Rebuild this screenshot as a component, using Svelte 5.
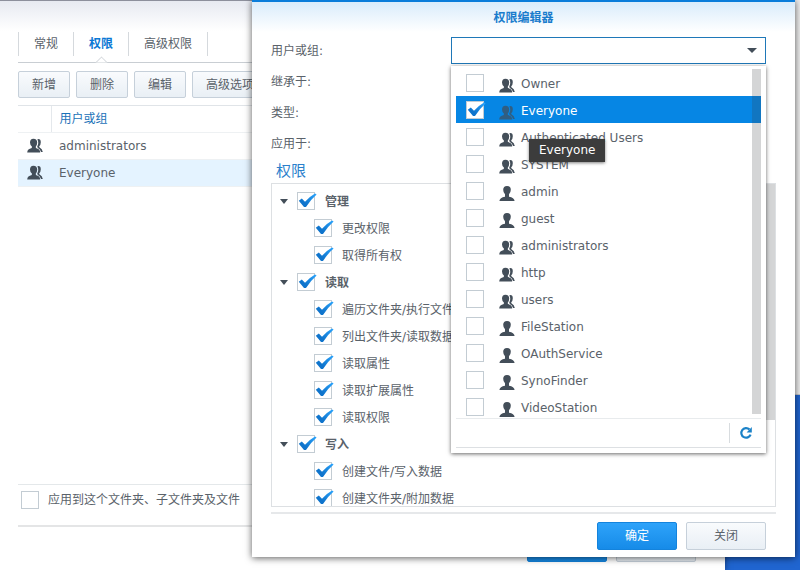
<script>
    let tabs = ["常规", "权限", "高级权限"];
    let activeTab = $state("权限");

    let actions = ["新增", "删除", "编辑", "高级选项"];

    let entries = ["administrators", "Everyone"];
    let currentEntry = $state("Everyone");

    let accounts = $state([
        { name: "Owner", group: true, checked: false },
        { name: "Everyone", group: true, checked: true },
        { name: "Authenticated Users", group: true, checked: false },
        { name: "SYSTEM", group: true, checked: false },
        { name: "admin", group: false, checked: false },
        { name: "guest", group: false, checked: false },
        { name: "administrators", group: true, checked: false },
        { name: "http", group: true, checked: false },
        { name: "users", group: true, checked: false },
        { name: "FileStation", group: false, checked: false },
        { name: "OAuthService", group: false, checked: false },
        { name: "SynoFinder", group: false, checked: false },
        { name: "VideoStation", group: false, checked: false },
    ]);

    let permissions = [
        { name: "管理", items: ["更改权限", "取得所有权"] },
        {
            name: "读取",
            items: [
                "遍历文件夹/执行文件",
                "列出文件夹/读取数据",
                "读取属性",
                "读取扩展属性",
                "读取权限",
            ],
        },
        { name: "写入", items: ["创建文件/写入数据", "创建文件夹/附加数据"] },
    ];

    let open = $state(true);
    let query = $state("");
</script>

{#snippet mark()}
    <svg class="mark" viewBox="0 0 20 18" aria-hidden="true">
        <defs>
            <linearGradient id="tick" x1="0" y1="1" x2="1" y2="0">
                <stop offset="0.3" stop-color="#0f74cc" />
                <stop offset="1" stop-color="#2ba6ff" />
            </linearGradient>
        </defs>
        <path
            d="M1.8 8.8 L4.8 6.6 L8 9.8 Q12 4.8 18 1.4 L19.6 2.6 Q13.4 8 9 15 L7 15 Z"
            fill="url(#tick)"
        />
    </svg>
{/snippet}

{#snippet person(group)}
    <svg class="person" viewBox="0 0 16 15" aria-hidden="true">
        {#if group}
            <path
                d="M10.4 1.2 Q13.8 .6 13.8 4.2 Q13.8 6.8 12.2 8.2 L12.4 9.2 Q15.4 10.8 15.8 14 L14 14 Q13.2 11.2 10.8 10 L10.2 8.6 Q12.2 5 10.4 1.2 Z"
            />
            <path
                d="M6.4 .8 Q10.2 .8 10.2 4.6 Q10.2 7.2 8.8 8.4 L8.9 10 Q13 11 13.2 14.4 L.2 14.4 Q.4 11 4.8 10 L4.9 8.4 Q3 7.2 3 4.6 Q3 .8 6.4 .8 Z"
            />
        {:else}
            <path
                d="M8 0 Q11.8 0 11.8 3.8 Q11.8 6.6 10 8.2 L10 10.8 Q15.2 11.6 15.6 15 L.4 15 Q.8 11.6 6 10.8 L6 8.2 Q4.2 6.6 4.2 3.8 Q4.2 0 8 0 Z"
            />
        {/if}
    </svg>
{/snippet}

<div class="desktop">
    <div class="back-window"></div>

    <section class="window properties">
        <nav class="tabs">
            {#each tabs as tab}
                <button
                    class="tab"
                    class:active={tab === activeTab}
                    onclick={() => (activeTab = tab)}>{tab}</button
                >
            {/each}
        </nav>

        <div class="toolbar">
            {#each actions as action}
                <button class="btn">{action}</button>
            {/each}
        </div>

        <div class="grid">
            <table>
                <thead>
                    <tr><th class="type"></th><th>用户或组</th></tr>
                </thead>
                <tbody>
                    {#each entries as entry}
                        <tr
                            class:selected={entry === currentEntry}
                            onclick={() => (currentEntry = entry)}
                        >
                            <td class="type">{@render person(true)}</td>
                            <td>{entry}</td>
                        </tr>
                    {/each}
                </tbody>
            </table>
        </div>

        <label class="apply">
            <span class="check"><input type="checkbox" />{@render mark()}</span>
            应用到这个文件夹、子文件夹及文件
        </label>

        <footer class="window-actions">
            <button class="btn wide primary">确定</button>
            <button class="btn wide">取消</button>
        </footer>
    </section>

    <section class="window editor" role="dialog" aria-labelledby="title">
        <h1 id="title">权限编辑器</h1>

        <div class="form">
            <div class="field">
                <label for="account">用户或组:</label>
                <div class="combo">
                    <input id="account" type="text" autocomplete="off" bind:value={query} />
                    <button
                        class="trigger"
                        aria-label="用户或组"
                        onclick={() => (open = !open)}
                    ></button>

                    {#if open}
                        <div class="dropdown">
                            <div class="options">
                                {#each accounts as account}
                                    <label class="option" class:selected={account.checked}>
                                        <span class="check">
                                            <input
                                                type="checkbox"
                                                bind:checked={account.checked}
                                            />
                                            {@render mark()}
                                        </span>
                                        {@render person(account.group)}
                                        <span class="name">{account.name}</span>
                                    </label>
                                {/each}
                                <div class="scroll"></div>
                            </div>
                            <div class="paging">
                                <button class="refresh" aria-label="刷新">
                                    <svg viewBox="0 0 14 14" aria-hidden="true">
                                        <path
                                            d="M10.4 3.4 A4.8 4.8 0 1 0 11.6 8.6"
                                            fill="none"
                                            stroke="#1b82c8"
                                            stroke-width="2.2"
                                        />
                                        <path d="M12.8 1 V6.4 H7.6 Z" fill="#1b82c8" />
                                    </svg>
                                </button>
                            </div>
                            <div class="tooltip">Everyone</div>
                        </div>
                    {/if}
                </div>
            </div>
            <div class="field"><span>继承于:</span></div>
            <div class="field"><span>类型:</span></div>
            <div class="field"><span>应用于:</span></div>
        </div>

        <h2>权限</h2>
        <div class="tree">
            {#each permissions as group}
                <div class="node">
                    <i class="arrow"></i>
                    <label>
                        <span class="check"
                            ><input type="checkbox" checked />{@render mark()}</span
                        >
                        <b>{group.name}</b>
                    </label>
                </div>
                {#each group.items as item}
                    <div class="node leaf">
                        <label>
                            <span class="check"
                                ><input type="checkbox" checked />{@render mark()}</span
                            >
                            {item}
                        </label>
                    </div>
                {/each}
            {/each}
            <div class="scroll"></div>
        </div>

        <footer class="editor-actions">
            <button class="btn wide primary">确定</button>
            <button class="btn wide">关闭</button>
        </footer>
    </section>
</div>

<style>
    :global(body) {
        margin: 0;
    }

    .desktop {
        position: relative;
        height: 100vh;
        overflow: hidden;
        background: #2065d0;
        color: #5a626a;
        font: 12px/18px "DejaVu Sans", "Noto Sans CJK SC", sans-serif;
    }

    .desktop *,
    .desktop *::before {
        box-sizing: border-box;
    }

    button,
    input {
        font: inherit;
        color: inherit;
        margin: 0;
    }

    .back-window {
        position: absolute;
        top: 0;
        right: 0;
        width: 200px;
        height: 395px;
        background: #ededed;
        border-bottom: 1px solid #c8c8c8;
    }

    .window {
        position: absolute;
        top: 0;
        display: flex;
        flex-direction: column;
        background: #fff;
    }

    /* properties window */

    .properties {
        left: 0;
        right: 75px;
        height: 100%;
        padding: 31px 29px 8px 18px;
        border-top: 1px solid #8d909c;
        background: linear-gradient(#e7eaf1, #fff 30px);
        box-shadow: 0 0 6px rgba(0, 0, 0, 0.5);
    }

    .tabs {
        display: flex;
        padding-bottom: 6px;
        border-bottom: 1px solid #c9ced3;
    }

    .tab {
        position: relative;
        height: 24px;
        padding: 0 15px;
        border: 0;
        border-left: 1px solid #d5d9dd;
        background: none;
    }

    .tab:last-child {
        border-right: 1px solid #d5d9dd;
    }

    .tab.active {
        color: #0a78d4;
        font-weight: bold;
    }

    .tab.active::after {
        content: "";
        position: absolute;
        left: 50%;
        bottom: -11px;
        width: 8px;
        height: 8px;
        margin-left: -4px;
        background: #fff;
        border: solid #c9ced3;
        border-width: 1px 0 0 1px;
        transform: rotate(45deg);
        clip-path: polygon(0 0, 100% 0, 0 100%);
    }

    .toolbar {
        display: flex;
        gap: 6px;
        padding: 8px 0 7px;
    }

    .btn {
        height: 27px;
        padding: 0 13px;
        border: 1px solid #c6d0da;
        border-radius: 2px;
        background: linear-gradient(#f9fbfd, #e9eff5);
    }

    .btn.wide {
        width: 80px;
        height: 28px;
    }

    .btn.primary {
        border-color: #1483dc;
        background: linear-gradient(#2ea3fa, #168be8);
        color: #fff;
    }

    .grid {
        flex: 1;
        border-top: 1px solid #e0e4e8;
        border-bottom: 1px solid #e4e8ea;
    }

    table {
        width: 100%;
        border-collapse: collapse;
    }

    th,
    td {
        height: 27px;
        padding: 0 8px;
        border-bottom: 1px solid #eef1f3;
        text-align: left;
    }

    th {
        height: 26px;
        color: #1a72b8;
        font-weight: normal;
    }

    .type {
        width: 33px;
        padding: 0;
    }

    th.type {
        border-right: 1px solid #e4e8ec;
    }

    td .person {
        display: block;
        margin-left: 9px;
    }

    tr.selected {
        background: #e4f3ff;
    }

    .apply {
        display: flex;
        align-items: center;
        gap: 9px;
        height: 42px;
        padding: 0 3px 11px;
        border-bottom: 2px solid #e4e5e6;
    }

    .window-actions {
        display: flex;
        justify-content: flex-end;
        gap: 9px;
        padding-top: 7px;
    }

    /* shared pieces */

    .check {
        display: grid;
        flex: none;
        width: 18px;
        height: 18px;
    }

    .check input {
        grid-area: 1 / 1;
        width: 18px;
        height: 18px;
        appearance: none;
        border: 1px solid #c3ccd3;
        background: #fff;
    }

    .mark {
        grid-area: 1 / 1;
        width: 20px;
        height: 18px;
        pointer-events: none;
        visibility: hidden;
    }

    .check input:checked + .mark {
        visibility: visible;
    }

    .person {
        flex: none;
        width: 16px;
        height: 15px;
        fill: #434e59;
    }

    .scroll {
        position: absolute;
        top: 0;
        right: 0;
        width: 9px;
        background: rgba(60, 65, 70, 0.22);
    }

    /* permission editor */

    .editor {
        left: 252px;
        right: 5px;
        padding: 0 19px 7px;
        border-top: 2px solid #0a7dda;
        background: linear-gradient(#d9ecfb, #fff 30px);
        box-shadow: 0 1px 7px rgba(0, 0, 0, 0.65);
    }

    h1 {
        height: 33px;
        margin: 0;
        color: #1a7ccc;
        font-size: 12px;
        line-height: 32px;
        text-align: center;
    }

    .form {
        padding-right: 10px;
    }

    .field {
        display: grid;
        grid-template-columns: 180px 1fr;
        align-items: center;
        height: 31px;
    }

    .combo {
        position: relative;
        display: flex;
        height: 27px;
        border: 1px solid #1f78b8;
        background: #fff;
    }

    .combo > input {
        flex: 1;
        min-width: 0;
        padding: 0 8px;
        border: 0;
        outline: 0;
        background: none;
    }

    .trigger {
        display: grid;
        place-items: center;
        width: 26px;
        padding: 0;
        border: 0;
        background: none;
    }

    .trigger::before,
    .arrow {
        content: "";
        width: 10px;
        height: 5px;
        background: #434e59;
        clip-path: polygon(0 0, 100% 0, 50% 100%);
    }

    .dropdown {
        position: absolute;
        z-index: 1;
        top: 28px;
        left: -1px;
        right: -1px;
        padding: 3px 5px 5px;
        background: #fff;
        box-shadow: 0 1px 4px rgba(0, 0, 0, 0.6);
    }

    .options {
        position: relative;
        height: 350px;
        overflow: hidden;
        border-bottom: 1px solid #e8ebed;
    }

    .options .scroll {
        height: 345px;
    }

    .option {
        display: flex;
        align-items: center;
        height: 27px;
        padding: 0 10px;
    }

    .option .person {
        margin: 6px 6px 0 15px;
    }

    .option .name {
        padding-top: 2px;
    }

    .option.selected {
        background: #0686e4;
        color: #fff;
    }

    .option.selected .person {
        opacity: 0.7;
    }

    .paging {
        display: flex;
        justify-content: flex-end;
        padding: 4px 0;
        border-bottom: 1px solid #dde0e3;
    }

    .refresh {
        display: grid;
        place-items: center;
        width: 32px;
        height: 20px;
        padding: 0;
        border: 0;
        border-left: 1px solid #d8dcdf;
        background: none;
    }

    .refresh svg {
        width: 14px;
        height: 14px;
    }

    .tooltip {
        position: absolute;
        top: 73px;
        left: 78px;
        padding: 2px 10px 3px;
        background: #3c3c3c;
        box-shadow: 0 1px 3px rgba(0, 0, 0, 0.5);
        color: #fff;
    }

    h2 {
        height: 24px;
        margin: 0;
        padding-left: 5px;
        color: #2a80cc;
        font-size: 15px;
        font-weight: normal;
        line-height: 24px;
    }

    .tree {
        position: relative;
        height: 324px;
        padding-top: 4px;
        overflow: hidden;
        border: 1px solid #dde0e3;
    }

    .tree .scroll {
        height: 236px;
    }

    .tree .check {
        margin-bottom: 2px;
    }

    .node {
        display: flex;
        align-items: center;
        gap: 9px;
        height: 27px;
        padding-left: 8px;
    }

    .node label {
        display: flex;
        align-items: center;
        gap: 10px;
    }

    .leaf {
        padding-left: 42px;
    }

    .arrow {
        width: 8px;
    }

    .editor-actions {
        display: flex;
        justify-content: flex-end;
        gap: 9px;
        margin-top: 5px;
        padding: 8px 10px 0 0;
        border-top: 2px solid #e6e8ea;
    }
</style>
